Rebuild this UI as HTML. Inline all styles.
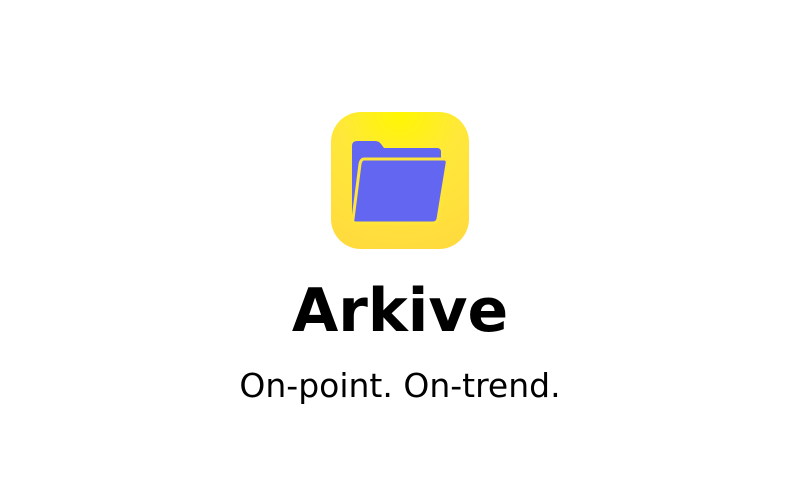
<!DOCTYPE html>
<html><head><style>
body{margin:0;width:800px;height:500px;background:#fff;font-family:"DejaVu Sans","Liberation Sans",sans-serif;position:relative;overflow:hidden}
.icon{position:absolute;left:331px;top:112px;width:138px;height:137px;border-radius:30px;background:radial-gradient(circle at 50% 0%,#fff700 0%,#ffe83a 40%,#ffd93e 100%)}
.t{position:absolute;left:0;width:800px;text-align:center;color:#000}
</style></head><body>
<div class="icon">
<svg width="138" height="137" viewBox="331 112 138 137">
<path d="M352 146 q0-5 5-5 h18 q4 0 6 3 l3 4 h53 q4 0 4 4 v6 h-71 q-6 0 -7 6 l-7 53 q-1 2 -2 2 q-2 0-2-2 z" fill="#6366f1"/>
<path d="M364 159 h80 q4 0 3 5 l-9 55 q-1 4 -5 4 h-77 q-4 0 -3-4 l7-55 q1-5 4-5 z" fill="#6366f1" stroke="#ffe43a" stroke-width="3"/>
</svg>
</div>
<div class="t" style="top:276px;font-size:60px;font-weight:bold">Arkive</div>
<div class="t" style="top:366px;font-size:33px">On-point. On-trend.</div>
</body></html>
